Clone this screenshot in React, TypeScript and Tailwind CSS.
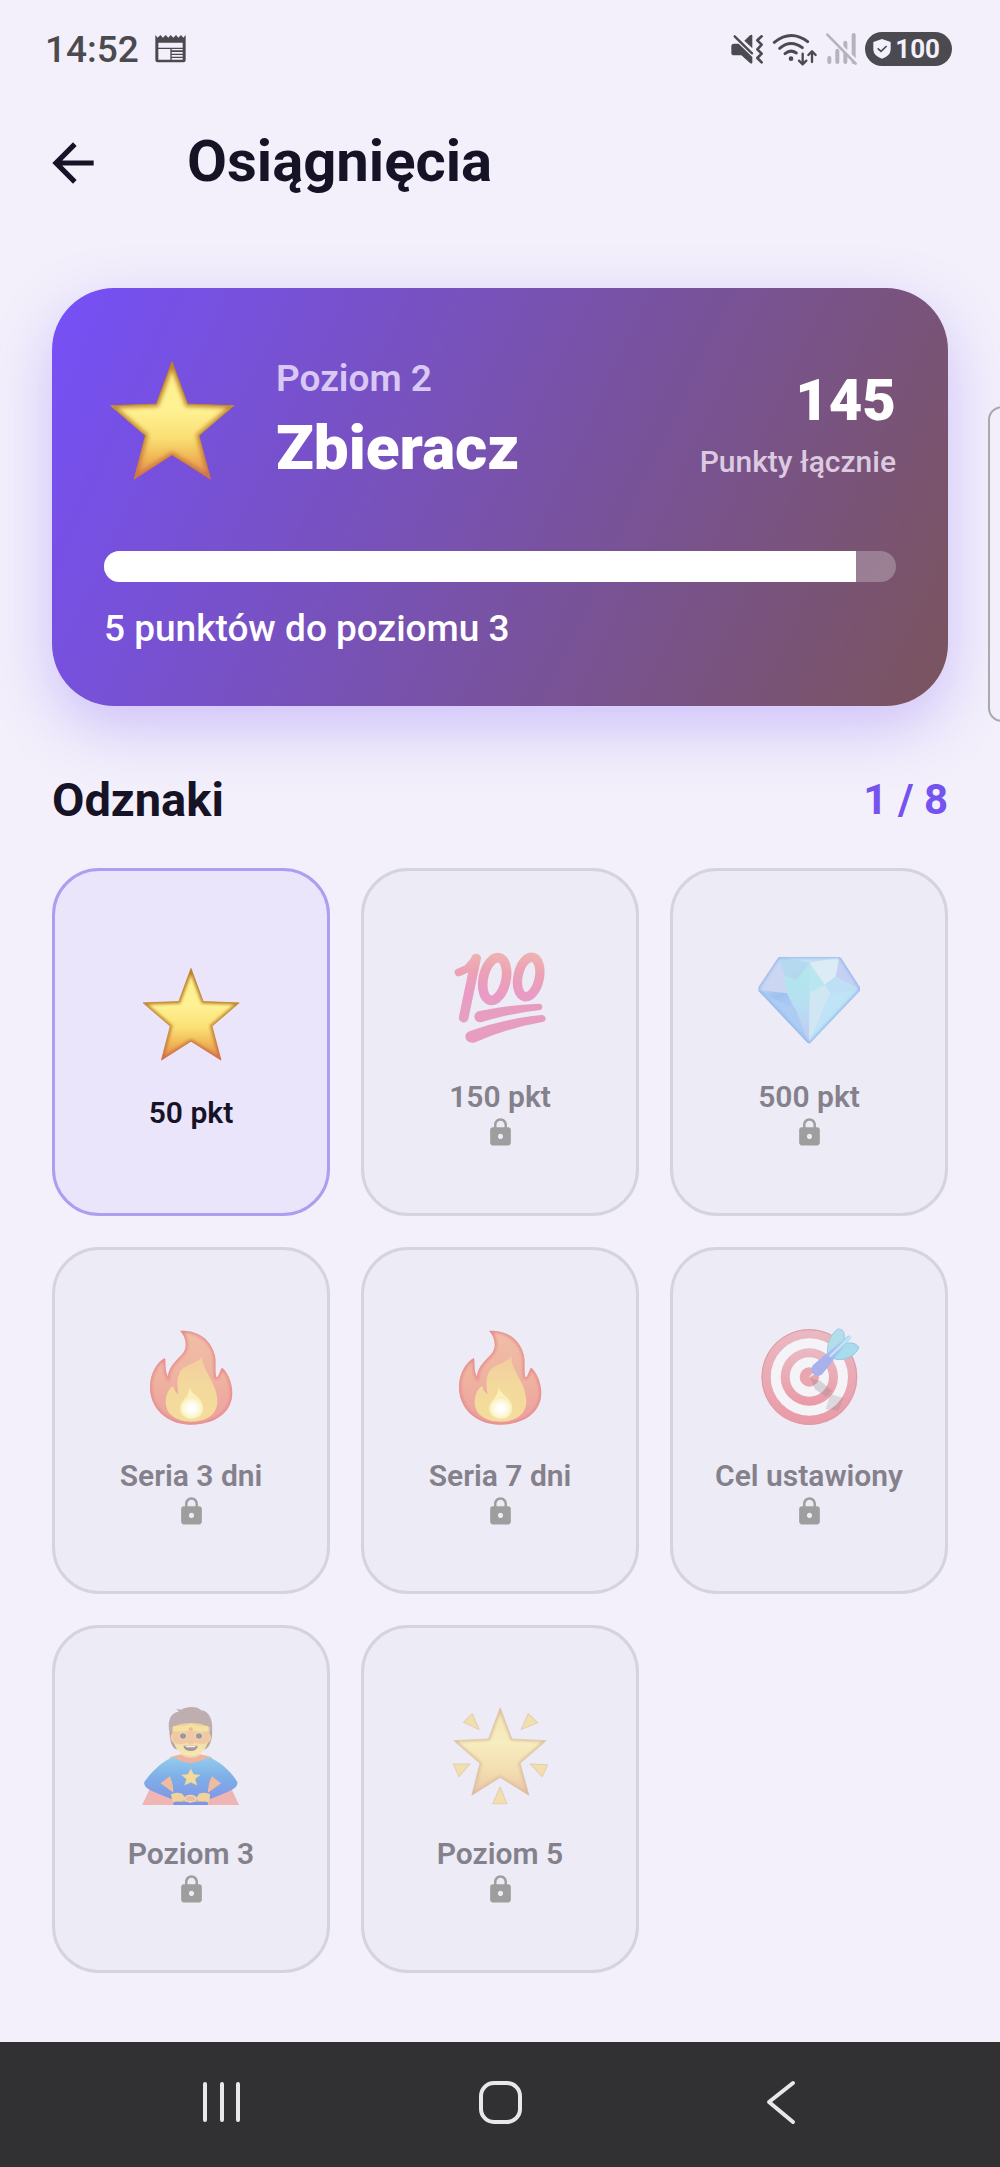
import React, { useId } from 'react';
import { MdArrowBack, MdLock } from 'react-icons/md';

type IconProps = { className?: string };

interface Badge {
  id: string;
  label: string;
  icon: React.ComponentType<IconProps>;
  unlocked?: boolean;
}

/* ---------- Emoji drawings ---------- */

function StarEmoji({ className }: IconProps) {
  const id = useId();
  const d = 'M395 274L442 402L581 407L476 497L511 628L395 555L281 628L315 497L210 407L348 402Z';
  return (
    <svg viewBox="202 257 386 386" className={className} aria-hidden="true">
      <defs>
        <linearGradient id={`${id}f`} x1="0" y1="0" x2="0" y2="1">
          <stop offset="0" stopColor="#fdf08a" />
          <stop offset="0.4" stopColor="#fff294" />
          <stop offset="0.65" stopColor="#fadf74" />
          <stop offset="0.82" stopColor="#f0b755" />
          <stop offset="1" stopColor="#e08450" />
        </linearGradient>
        <linearGradient id={`${id}s`} x1="0" y1="0" x2="0" y2="1">
          <stop offset="0" stopColor="#b87a26" />
          <stop offset="0.6" stopColor="#c48c30" />
          <stop offset="1" stopColor="#d0704a" />
        </linearGradient>
        <clipPath id={`${id}c`}>
          <path d={d} />
        </clipPath>
        <filter id={`${id}b`}>
          <feGaussianBlur stdDeviation="7" />
        </filter>
      </defs>
      <path d={d} fill={`url(#${id}f)`} stroke={`url(#${id}s)`} strokeWidth="3" strokeLinejoin="round" />
      <g clipPath={`url(#${id}c)`}>
        <path d={d} fill="none" stroke={`url(#${id}s)`} strokeWidth="15" filter={`url(#${id}b)`} />
      </g>
    </svg>
  );
}

function HundredEmoji({ className }: IconProps) {
  const id = useId();
  return (
    <svg viewBox="300 294 300 300" className={className} aria-hidden="true">
      <defs>
        <linearGradient id={id} gradientUnits="userSpaceOnUse" x1="0" y1="308" x2="0" y2="470">
          <stop offset="0" stopColor="#efb3b3" />
          <stop offset="0.35" stopColor="#eba2b4" />
          <stop offset="0.8" stopColor="#e99ac6" />
          <stop offset="1" stopColor="#e6a0c2" />
        </linearGradient>
      </defs>
      <g fill="none" stroke={`url(#${id})`} strokeLinecap="round" strokeLinejoin="round">
        <polyline points="326,367 352,356 380,324" strokeWidth="24" />
        <line x1="378" y1="326" x2="341" y2="503" strokeWidth="29" />
        <ellipse cx="434" cy="387" rx="34" ry="65" strokeWidth="29" transform="rotate(12 434 387)" />
        <ellipse cx="536" cy="381" rx="32" ry="60" strokeWidth="28" transform="rotate(12 536 381)" />
      </g>
      <path d="M388 483Q480 464 566 461Q577 461 577 471Q577 480 566 481Q480 490 393 517Q375 517 373 501Q374 486 388 483Z" fill="#e69dc0" />
      <path d="M360 543Q470 505 574 495Q587 496 587 507Q586 515 574 517Q470 535 372 578Q350 580 346 562Q346 547 360 543Z" fill="#e69dc0" />
    </svg>
  );
}

function DiamondEmoji({ className }: IconProps) {
  const id = useId();
  const d = 'M360 320H538L545 325L601 412V422L453 578Q448 583 443 578L296 422V412L354 325Z';
  return (
    <svg viewBox="298 294 300 300" className={className} overflow="visible" aria-hidden="true">
      <defs>
        <linearGradient id={`${id}a`} x1="0" y1="0" x2="1" y2="1">
          <stop offset="0" stopColor="#c7cff4" />
          <stop offset="1" stopColor="#b9d8f6" />
        </linearGradient>
        <linearGradient id={`${id}m`} x1="0" y1="0" x2="0" y2="1">
          <stop offset="0" stopColor="#b0e8ea" />
          <stop offset="0.5" stopColor="#b6e0f1" />
          <stop offset="1" stopColor="#c4c8f5" />
        </linearGradient>
        <linearGradient id={`${id}l`} x1="0" y1="0" x2="1" y2="1">
          <stop offset="0" stopColor="#b4d2f6" />
          <stop offset="0.4" stopColor="#9fc1ef" />
          <stop offset="1" stopColor="#b7cff8" />
        </linearGradient>
        <clipPath id={`${id}c`}>
          <path d={d} />
        </clipPath>
        <filter id={`${id}b`}>
          <feGaussianBlur stdDeviation="4" />
        </filter>
      </defs>
      <g clipPath={`url(#${id}c)`}>
        <path d={d} fill={`url(#${id}a)`} />
        <path d="M358 320L374 376L382 430L290 420Z" fill="#cbd6f3" />
        <path d="M358 320L450 338L412 390L374 376Z" fill="#b5daf0" />
        <path d="M358 320H540L450 338Z" fill="#c5e2f5" />
        <path d="M450 338L374 376L382 430L448 580V338Z" fill={`url(#${id}m)`} />
        <path d="M374 376L448 340L412 390Z" fill="#b5d8ef" />
        <path d="M450 338L495 404L513 428L448 580Z" fill="#cfe6f3" />
        <path d="M450 338L495 404L448 430Z" fill="#b9e6ef" />
        <path d="M450 338L540 320L528 380L495 404Z" fill="#dcecf6" />
        <path d="M540 320L605 418L528 388Z" fill="#c6d0f4" />
        <path d="M528 380L605 418L513 428L495 404Z" fill="#bedff4" />
        <path d="M513 428L605 420L448 582Z" fill="#bfe3f7" />
        <path d="M290 420L382 430L412 490Z" fill={`url(#${id}l)`} />
        <path d="M290 420L408 478L448 582Z" fill="#acccf4" />
        <path d={d} fill="none" stroke="#8fb4ea" strokeWidth="8" filter={`url(#${id}b)`} />
      </g>
    </svg>
  );
}

function FireEmoji({ className }: IconProps) {
  const id = useId();
  const d =
    'M420 270C470 268 512 292 525 345C529 368 524 392 529 410C538 408 538 392 546 381C560 390 577 425 577 458C576 515 525 552 453 552C380 552 330 502 330 440C330 402 348 366 375 352C378 372 374 392 384 408C386 375 412 358 430 336C443 318 438 288 420 270Z';
  return (
    <svg viewBox="303 259 300 300" className={className} aria-hidden="true">
      <defs>
        <linearGradient id={`${id}f`} x1="0" y1="0" x2="0" y2="1">
          <stop offset="0" stopColor="#f0bfa6" />
          <stop offset="0.5" stopColor="#efb3a0" />
          <stop offset="1" stopColor="#eda0a0" />
        </linearGradient>
        <linearGradient id={`${id}y`} x1="0" y1="0" x2="0" y2="1">
          <stop offset="0" stopColor="#f2cda0" />
          <stop offset="0.5" stopColor="#f3da9c" />
          <stop offset="1" stopColor="#f4dc9c" />
        </linearGradient>
        <radialGradient id={`${id}w`}>
          <stop offset="0.3" stopColor="#fffefa" />
          <stop offset="0.8" stopColor="#fbf5cd" />
          <stop offset="1" stopColor="#f7e6a8" stopOpacity="0" />
        </radialGradient>
        <clipPath id={`${id}c`}>
          <path d={d} />
        </clipPath>
        <filter id={`${id}b`}>
          <feGaussianBlur stdDeviation="4" />
        </filter>
      </defs>
      <path d={d} fill={`url(#${id}f)`} />
      <g clipPath={`url(#${id}c)`}>
        <path d={d} fill="none" stroke="#e58c90" strokeWidth="11" filter={`url(#${id}b)`} />
      </g>
      <path
        d="M488 346C482 385 532 425 532 482C532 522 500 543 455 543C408 543 377 520 377 484C377 463 387 442 400 437C402 448 408 457 416 461C412 440 410 422 417 400C428 370 465 375 488 346Z"
        fill={`url(#${id}y)`}
      />
      <path d="M448 440C454 462 490 472 490 503C490 524 475 534 455 534C435 534 420 522 420 502C420 482 450 470 448 440Z" fill="#faf0b8" />
      <ellipse cx="455" cy="503" rx="36" ry="34" fill={`url(#${id}w)`} />
    </svg>
  );
}

function TargetEmoji({ className }: IconProps) {
  const id = useId();
  return (
    <svg viewBox="298 259 300 300" className={className} overflow="visible" aria-hidden="true">
      <defs>
        <linearGradient id={`${id}r`} x1="0" y1="0" x2="0" y2="1">
          <stop offset="0" stopColor="#eabac2" />
          <stop offset="1" stopColor="#e99aa6" />
        </linearGradient>
        <linearGradient id={`${id}d`} x1="0" y1="1" x2="1" y2="0">
          <stop offset="0" stopColor="#a9abea" />
          <stop offset="0.5" stopColor="#a5bdf0" />
          <stop offset="1" stopColor="#abdcf0" />
        </linearGradient>
      </defs>
      <circle cx="449" cy="409" r="144" fill={`url(#${id}r)`} />
      <circle cx="449" cy="409" r="142" fill="none" stroke="#dd9ba6" strokeWidth="3" />
      <circle cx="449" cy="409" r="116" fill="#f4f3f8" />
      <circle cx="449" cy="409" r="86" fill={`url(#${id}r)`} />
      <circle cx="449" cy="409" r="59" fill="#f4f3f8" />
      <circle cx="449" cy="409" r="29" fill="#e9a6ae" />
      <path d="M452 412L482 420L518 452L500 468L466 446Z" fill="#8e8890" opacity="0.3" />
      <path d="M512 460L552 472L536 510L498 506Z" fill="#8e8890" opacity="0.25" />
      <path d="M446 412L470 382L482 392Z" fill="#e9e6e8" />
      <path d="M504 340C500 310 514 280 534 265C548 264 557 272 553 298L530 336Z" fill="#b2deea" stroke="#9fcbe2" strokeWidth="3" />
      <path d="M520 352L560 308C580 304 596 312 597 322C588 345 556 360 530 356Z" fill="#a8dbec" stroke="#94c8e4" strokeWidth="3" />
      <path d="M470 404C452 398 454 384 460 374L566 284L576 290L486 400C482 405 476 406 470 404Z" fill={`url(#${id}d)`} />
      <path d="M470 404C452 398 452 384 462 372L500 340L522 358L488 400C482 405 476 406 470 404Z" fill="#a7b2ec" />
      <path d="M512 346L572 288" stroke="#c5e6f5" strokeWidth="6" strokeLinecap="round" />
    </svg>
  );
}

function HeroEmoji({ className }: IconProps) {
  const id = useId();
  return (
    <svg viewBox="260 252 257 300" preserveAspectRatio="none" className={className} aria-hidden="true">
      <defs>
        <linearGradient id={`${id}b`} x1="0" y1="0" x2="0" y2="1">
          <stop offset="0" stopColor="#94cdec" />
          <stop offset="0.4" stopColor="#7fb0e8" />
          <stop offset="1" stopColor="#7f92e6" />
        </linearGradient>
        <linearGradient id={`${id}s`} x1="0" y1="0" x2="0" y2="1">
          <stop offset="0" stopColor="#f0cf9c" />
          <stop offset="1" stopColor="#f5e9b4" />
        </linearGradient>
      </defs>
      {/* cape */}
      <path d="M282 505L263 552H512L493 505Z" fill="#efb5b4" />
      <path d="M335 408Q388 390 441 408L470 470L460 515H315L305 480Z" fill="#f1bba0" />
      {/* suit */}
      <path
        d="M345 408C320 415 288 450 268 484C268 496 275 504 292 512L338 534L345 516L310 487L334 466C342 486 345 505 343 552H432C430 505 434 486 442 466L466 487L431 516L438 534L484 512C501 504 508 496 508 484C492 450 456 415 431 408Q388 436 345 408Z"
        fill={`url(#${id}b)`}
      />
      <path d="M341 406Q388 390 435 406Q410 426 388 426Q365 426 341 406Z" fill="#efb3a4" />
      <path d="M360 398H416Q405 410 388 410Q370 410 360 398Z" fill="#f0d8a4" />
      <path d="M388 443L395 460L412 462L399 474L404 493L388 484L372 493L377 474L364 462L381 460Z" fill="#f2dc9c" stroke="#e6c98e" strokeWidth="1" />
      <path d="M343 527H432V543H343Z" fill="#c9b6ae" />
      <ellipse cx="387" cy="533" rx="14" ry="10" fill="#efb9a8" stroke="#f0d9ae" strokeWidth="4" />
      <path d="M337 520Q348 512 366 518L374 532L366 540H350L342 545Z" fill="#f0d29c" />
      <path d="M438 520Q427 512 409 518L402 532L409 540H425L434 545Z" fill="#f0d29c" />
      {/* head */}
      <path d="M333 330C334 365 340 380 350 385H426C438 375 443 355 443 330L436 295H340Z" fill="#b9a6a8" />
      <ellipse cx="388" cy="350" rx="52" ry="30" fill="#f0d2a2" />
      <path d="M341 318C339 370 352 404 388 404C424 404 437 370 435 318Q388 290 341 318Z" fill={`url(#${id}s)`} />
      <path
        d="M332 328C328 292 340 274 357 272L351 263L363 266C380 254 406 256 415 268C434 270 445 295 443 328L436 334L430 312Q388 300 346 312L340 334Z"
        fill="#bfaeb0"
      />
      <path d="M340 318Q388 330 437 318L434 362Q412 378 388 360Q362 378 342 362Z" fill="#f0c8a4" />
      <path d="M343 314Q366 320 388 308Q410 320 433 314V330Q410 334 388 328Q364 334 343 330Z" fill="#f4e2a0" />
      <circle cx="388" cy="324" r="5" fill="#eeb59a" />
      <circle cx="368" cy="344" r="11" fill="#f2d9b6" />
      <circle cx="409" cy="344" r="11" fill="#f2d9b6" />
      <circle cx="368" cy="345" r="8" fill="#a19698" />
      <circle cx="409" cy="345" r="8" fill="#a19698" />
      <path d="M380 362Q388 357 396 362Q397 370 388 370Q379 370 380 362Z" fill="#efc79f" />
      <path d="M369 374H406Q404 390 388 390Q371 390 369 374Z" fill="#a8979a" />
      <path d="M374 375H401L398 379H377Z" fill="#f6f2f2" />
    </svg>
  );
}

function GlowingStarEmoji({ className }: IconProps) {
  const id = useId();
  const d = 'M1183 260L1213 354L1301 359L1234 427L1257 523L1183 469L1110 523L1131 427L1064 359L1153 354Z';
  const rays =
    'M1111 278L1129 326L1089 304ZM1255 278L1279 305L1237 326ZM1063 429L1105 429L1077 467ZM1260 429L1305 431L1291 467ZM1183 498L1200 548H1164Z';
  return (
    <svg viewBox="1054 252 257 300" preserveAspectRatio="none" className={className} aria-hidden="true">
      <defs>
        <linearGradient id={`${id}f`} x1="0" y1="0" x2="0" y2="1">
          <stop offset="0" stopColor="#f4e6b8" />
          <stop offset="0.4" stopColor="#f7edc0" />
          <stop offset="0.75" stopColor="#f2dcae" />
          <stop offset="1" stopColor="#edbfae" />
        </linearGradient>
        <clipPath id={`${id}c`}>
          <path d={d} />
        </clipPath>
        <filter id={`${id}b`}>
          <feGaussianBlur stdDeviation="4" />
        </filter>
      </defs>
      <path d={d} fill={`url(#${id}f)`} stroke="#dcc8b0" strokeWidth="2" strokeLinejoin="round" />
      <g clipPath={`url(#${id}c)`}>
        <path d={d} fill="none" stroke="#dcbd9a" strokeWidth="8" filter={`url(#${id}b)`} />
      </g>
      <path d={rays} fill="#f2dfb0" stroke="#e6cfae" strokeWidth="3" strokeLinejoin="round" />
    </svg>
  );
}

/* ---------- Status bar ---------- */

function NewsIcon() {
  return (
    <svg viewBox="463 107 93 84" className="h-[28px] w-[31px]" aria-hidden="true">
      <path
        fill="#4b4a4f"
        fillRule="evenodd"
        d="M464 107L471 115L479 107L487 115L495 107L503 115L510 107L518 115L526 107L533 115L541 107L548 115L555 107V182Q555 189 548 189H471Q464 189 464 182ZM473 130V145H546V130ZM473 149V181H509V149ZM513 149V153H546V149ZM513 158V163H546V158ZM513 167V172H546V167ZM513 176V181H546V176Z"
      />
    </svg>
  );
}

function MuteIcon() {
  return (
    <svg viewBox="80 38 105 96" className="h-8 w-[35px]" aria-hidden="true">
      <path d="M92 70H106L147 110V127Q145 132 140 128L114 105H92Q84 105 84 97V78Q84 70 92 70Z" fill="#4b4a50" />
      <path d="M123 61L140 45Q147 41 147 48V84Z" fill="#4b4a50" />
      <path d="M94 48L146 99" stroke="#4b4a50" strokeWidth="7" strokeLinecap="round" />
      <path d="M175 48L162 60L175 73L162 87L175 100L162 113L175 126" fill="none" stroke="#4b4a50" strokeWidth="8" strokeLinecap="round" strokeLinejoin="round" />
    </svg>
  );
}

function WifiIcon() {
  return (
    <svg viewBox="208 36 138 99" className="h-[33px] w-[46px]" aria-hidden="true">
      <g fill="none" stroke="#4b4a50" strokeLinecap="round" strokeLinejoin="round">
        <path d="M215 64Q265 24 315 62" strokeWidth="9" />
        <path d="M231 82Q264 54 299 80" strokeWidth="9" />
        <path d="M247 98Q264 84 281 96" strokeWidth="9" />
        <path d="M300 98V128M289 119L300 130L311 119" strokeWidth="7" />
        <path d="M328 123V92M317 102L328 91L339 102" strokeWidth="7" />
      </g>
      <circle cx="265" cy="113" r="7" fill="#4b4a50" />
    </svg>
  );
}

function SignalOffIcon() {
  return (
    <svg viewBox="371 36 99 102" className="h-[34px] w-[33px]" aria-hidden="true">
      <g strokeLinecap="round">
        <path d="M384 114V126M408 92V126M432 68V126M457 45V126" stroke="#b5b3bd" strokeWidth="12" />
        <path d="M384 44L470 128" stroke="#f3f0fb" strokeWidth="9" />
        <path d="M378 44L463 131" stroke="#b5b3bd" strokeWidth="8" />
      </g>
    </svg>
  );
}

function StatusBar() {
  return (
    <div className="flex h-[98px] items-center justify-between pr-12 pl-[45px]">
      <div className="flex items-center gap-4">
        <span className="text-[37px] leading-none font-medium text-[#4b4a4f]">14:52</span>
        <NewsIcon />
      </div>
      <div className="flex items-center gap-[7px]">
        <MuteIcon />
        <WifiIcon />
        <SignalOffIcon />
        <div className="flex h-[34px] items-center gap-1 rounded-full bg-[#4b4a50] pr-3 pl-2">
          <svg viewBox="518 58 54 60" className="h-5 w-[18px]" aria-hidden="true">
            <path d="M545 58L571 67V90Q570 108 545 117Q520 108 519 90V67Z" fill="#f3f0fb" />
            <path d="M532 86L542 95L559 79" fill="none" stroke="#4b4a50" strokeWidth="5" />
          </svg>
          <span className="text-[26px] leading-none font-bold text-[#f3f0fb]">100</span>
        </div>
      </div>
    </div>
  );
}

/* ---------- Screen parts ---------- */

function LevelCard() {
  const progress = 95;
  return (
    <section className="rounded-[62px] bg-[linear-gradient(115deg,#7650f8,#7a545c)] px-[52px] pt-[52px] pb-[51px] text-white shadow-[0_21px_62px_rgba(118,80,248,0.3)]">
      <div className="flex h-40 items-center">
        <StarEmoji className="ml-1 h-32 w-32 shrink-0" />
        <div className="ml-10 flex flex-1 flex-col gap-1">
          <p className="text-[37px] leading-[52px] font-semibold text-[#d9c8f3]">Poziom 2</p>
          <p className="text-[62px] leading-[78px] font-black">Zbieracz</p>
        </div>
        <div className="text-right">
          <p className="text-[58px] leading-[84px] font-black">145</p>
          <p className="text-[30px] leading-10 font-medium text-[#dccbe0]">Punkty łącznie</p>
        </div>
      </div>
      <div
        className="mt-[51px] h-[31px] overflow-hidden rounded-full bg-white/25"
        role="progressbar"
        aria-valuenow={progress}
        aria-valuemin={0}
        aria-valuemax={100}
        aria-label="Poziom 3"
      >
        <div className="h-full bg-white" style={{ width: `${progress}%` }} />
      </div>
      <p className="mt-[21px] text-[37px] leading-[52px] font-medium">5 punktów do poziomu 3</p>
    </section>
  );
}

function BadgeTile({ badge }: { badge: Badge }) {
  const Icon = badge.icon;
  return (
    <li
      className={`flex aspect-[4/5] flex-col items-center justify-center rounded-[47px] border-3 ${
        badge.unlocked ? 'border-[#b09df1] bg-[#ebe5fb]' : 'border-[#d5d3de] bg-[#edebf5]'
      }`}
    >
      <div className="flex h-[126px] items-center justify-center">
        <Icon className="h-[100px] w-[100px]" />
      </div>
      <p className={`mt-4 text-[30px] leading-10 font-semibold ${badge.unlocked ? 'text-[#171327]' : 'text-[#84818c]'}`}>
        {badge.label}
      </p>
      {!badge.unlocked && <MdLock className="h-[31px] w-[31px] text-[#9e9e9e]" />}
    </li>
  );
}

const badges: Badge[] = [
  { id: 'p50', label: '50 pkt', icon: StarEmoji, unlocked: true },
  { id: 'p150', label: '150 pkt', icon: HundredEmoji },
  { id: 'p500', label: '500 pkt', icon: DiamondEmoji },
  { id: 's3', label: 'Seria 3 dni', icon: FireEmoji },
  { id: 's7', label: 'Seria 7 dni', icon: FireEmoji },
  { id: 'goal', label: 'Cel ustawiony', icon: TargetEmoji },
  { id: 'l3', label: 'Poziom 3', icon: HeroEmoji },
  { id: 'l5', label: 'Poziom 5', icon: GlowingStarEmoji },
];

function NavBar() {
  const stroke = { fill: 'none', stroke: '#e9e7ea', strokeWidth: 4, strokeLinecap: 'round', strokeLinejoin: 'round' } as const;
  return (
    <nav className="flex h-[125px] items-center justify-between bg-[#313133] px-[190px] pb-[5px]">
      <button type="button" aria-label="Ostatnie">
        <svg viewBox="0 0 64 64" className="h-16 w-16" {...stroke}>
          <path d="M15 14V50M32 14V50M48 14V50" />
        </svg>
      </button>
      <button type="button" aria-label="Ekran główny">
        <svg viewBox="0 0 64 64" className="h-16 w-16" {...stroke}>
          <rect x="13" y="13" width="39" height="39" rx="13" />
        </svg>
      </button>
      <button type="button" aria-label="Wstecz">
        <svg viewBox="0 0 64 64" className="h-16 w-16" {...stroke}>
          <path d="M47 13L23 32L47 52" />
        </svg>
      </button>
    </nav>
  );
}

export default function App() {
  return (
    <div className="relative flex min-h-screen flex-col overflow-hidden bg-[#f3f0fb] font-['Roboto',sans-serif] text-[#171327]">
      <StatusBar />

      <header className="flex h-[130px] items-center gap-[83px] px-[42px]">
        <button type="button" aria-label="Wróć">
          <MdArrowBack className="h-[62px] w-[62px]" />
        </button>
        <h1 className="pb-1 text-[58px] leading-none font-bold">Osiągnięcia</h1>
      </header>

      <main className="flex-1 px-[52px] pt-[60px] pb-16">
        <LevelCard />

        <div className="mt-16 flex items-center justify-between">
          <h2 className="text-[47px] leading-[60px] font-bold">Odznaki</h2>
          <span className="text-[42px] leading-[60px] font-bold text-[#7453ee]">1 / 8</span>
        </div>

        <ul className="mt-[38px] grid grid-cols-3 gap-[31px]">
          {badges.map((badge) => (
            <BadgeTile key={badge.id} badge={badge} />
          ))}
        </ul>
      </main>

      <NavBar />

      {/* Edge panel handle */}
      <div className="absolute top-[406px] -right-4 h-[316px] w-[28px] rounded-[14px] border-2 border-[#a9a8ac] bg-[#f1effa]" />
    </div>
  );
}
